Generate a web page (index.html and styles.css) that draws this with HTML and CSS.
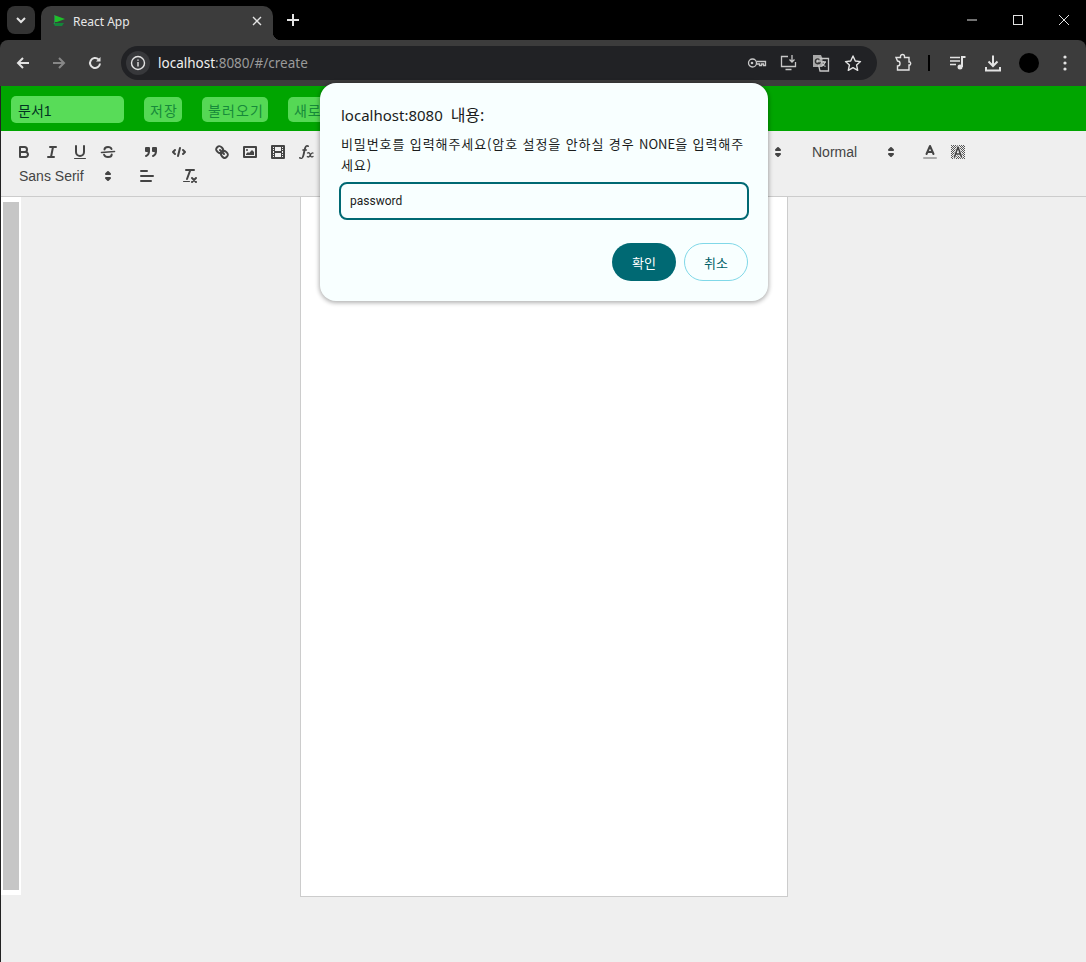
FILE: index.html
```html
<!DOCTYPE html>
<html lang="ko">
<head>
    <meta charset="UTF-8">
    <meta name="viewport" content="width=device-width, initial-scale=1.0">
    <title>React App</title>
    <link rel="stylesheet" href="styles.css">
</head>
<body>
<div class="window">

    <div class="tabstrip">
        <div class="tabsearch">
            <svg width="12" height="12" viewBox="0 0 12 12"><polyline class="line2" points="2 4 6 8 10 4"/></svg>
        </div>
        <div class="tab">
            <svg class="favicon" width="14" height="14" viewBox="0 0 14 14"><path fill="#1fbf2a" d="M2 1l11 4-8 3H3z"/><path fill="#14863a" d="M1 9h11l-2 3H3z"/><rect x="2" y="1" width="1" height="9" fill="#2f7f4f"/></svg>
            <span class="tabtitle">React App</span>
            <svg class="tabclose" width="10" height="10" viewBox="0 0 10 10"><path class="line" d="M1 1l8 8M9 1l-8 8"/></svg>
        </div>
        <svg class="newtab" width="12" height="12" viewBox="0 0 12 12"><path class="line2" d="M6 0v12M0 6h12"/></svg>
        <div class="winbtns">
            <svg width="10" height="10" viewBox="0 0 10 10"><path class="line1" d="M0 5h10"/></svg>
            <svg width="10" height="10" viewBox="0 0 10 10"><rect class="line1" x=".5" y=".5" width="9" height="9"/></svg>
            <svg width="10" height="10" viewBox="0 0 10 10"><path class="line1" d="M0 0l10 10M10 0L0 10"/></svg>
        </div>
    </div>

    <div class="navbar">
        <div class="navbtn">
            <svg width="16" height="16" viewBox="0 0 16 16"><path class="line2" d="M14 8H3M8 3L3 8l5 5"/></svg>
        </div>
        <div class="navbtn off">
            <svg width="16" height="16" viewBox="0 0 16 16"><path class="line2" d="M2 8h11M8 3l5 5-5 5"/></svg>
        </div>
        <div class="navbtn">
            <svg width="16" height="16" viewBox="0 0 16 16"><path class="line2" d="M13 8.500A5 5 0 1 1 11.500 4.400"/><path fill="#e3e3e3" d="M13.500 2v4.500H9z"/></svg>
        </div>
        <div class="omnibox">
            <div class="sitechip">
                <svg width="16" height="16" viewBox="0 0 16 16"><circle class="line" cx="8" cy="8" r="6.500"/><path class="line" d="M8 7v4.500M8 4.500v1.200"/></svg>
            </div>
            <div class="url"><span class="host">localhost</span>:8080/#/create</div>
            <svg class="omniicon" width="20" height="16" viewBox="0 0 20 16"><circle class="dim" cx="5.500" cy="8" r="4"/><circle fill="#c7c7c7" cx="5" cy="8" r="1.300"/><path class="dim" d="M9.500 6.500h9v4h-2V9h-2v1.500h-2V9H9.500"/></svg>
            <svg class="omniicon" width="20" height="18" viewBox="0 0 20 18"><path class="dim" d="M9 2.500H2.500v10h14V8M6.500 15.500h6"/><path class="dim" d="M13 1v7M10.500 5.500L13 8l2.500-2.500"/></svg>
            <svg class="omniicon" width="20" height="20" viewBox="0 0 20 20"><path fill="#a8a8a8" d="M2 2h8l1.500 3.500V14H2z"/><path class="dim" d="M6 5.500h11.500V18H9z"/><path class="dark" d="M8.500 6.500A2.500 2.500 0 1 0 8.800 10H6.500"/><path class="dim" d="M10 9h5M12.500 8v1M14 9c-.5 2-2 3.500-3.500 4M11 10.500c.7 1.300 2 2.300 3.500 3"/></svg>
            <svg class="omniicon" width="20" height="18" viewBox="0 0 20 18"><path class="line" stroke-linejoin="round" d="M10 2l2.300 5 5.200.6-3.900 3.500 1.100 5.200L10 13.700l-4.700 2.600 1.100-5.200L2.500 7.600 7.700 7z"/></svg>
        </div>
        <svg class="toolicon ext" width="20" height="20" viewBox="0 0 20 20"><path class="line" d="M3 4.500h4.500v-1a2 2 0 0 1 4 0v1H16V9h1a2 2 0 0 1 0 3h-1v5H4.500v-4c1.500 0 2.500-1 2.500-2.500S6 8 4.500 8z"/></svg>
        <div class="divider"></div>
        <svg class="toolicon media" width="20" height="18" viewBox="0 0 20 18"><path class="line" d="M2 3.500h10M2 7h10M2 10.500h6"/><path class="line2" d="M14 13V3h3.500"/><circle fill="#e3e3e3" cx="12" cy="13" r="2.500"/></svg>
        <svg class="toolicon down" width="20" height="20" viewBox="0 0 20 20"><path class="line2" d="M10 2.500V13M5.500 8.500L10 13l4.500-4.500M3 14v3.500h14V14"/></svg>
        <div class="avatar"></div>
        <svg class="toolicon kebab" width="4" height="16" viewBox="0 0 4 16"><circle fill="#e3e3e3" cx="2" cy="2" r="1.600"/><circle fill="#e3e3e3" cx="2" cy="8" r="1.600"/><circle fill="#e3e3e3" cx="2" cy="14" r="1.600"/></svg>
    </div>

    <div class="app">
        <header class="topbar">
            <input type="text" class="docname" value="문서1">
            <button class="topbtn">저장</button>
            <button class="topbtn">불러오기</button>
            <button class="topbtn">새로 만들기</button>
        </header>

        <div class="toolbar">
            <div class="group">
                <button class="tool"><svg viewBox="0 0 18 18"><path class="st" d="M5,4H9.500A2.500,2.500,0,0,1,12,6.500v0A2.500,2.500,0,0,1,9.500,9H5V4Z"/><path class="st" d="M5,9h5.500A2.500,2.500,0,0,1,13,11.500v0A2.500,2.500,0,0,1,10.500,14H5V9Z"/></svg></button>
                <button class="tool"><svg viewBox="0 0 18 18"><path class="st" d="M7 4h6M5 14h6M8 14l2-10"/></svg></button>
                <button class="tool"><svg viewBox="0 0 18 18"><path class="st" d="M5,3V9a4,4,0,0,0,4,4H9a4,4,0,0,0,4-4V3"/><rect class="fl" x="3" y="15" width="12" height="1" rx=".5"/></svg></button>
                <button class="tool"><svg viewBox="0 0 18 18"><path class="st thin" d="M15.500 8.500L2.500 9.500"/><path class="st" d="M12.500 6C12 4.600 10.600 4 9 4 7 4 5.500 5 5.500 6.500M12.700 11.500C12.700 13 11 14 9 14c-1.900 0-3.400-.8-3.900-2.300"/></svg></button>
            </div>
            <div class="group">
                <button class="tool"><svg viewBox="0 0 18 18"><rect class="fl st" x="4" y="5" width="3" height="3"/><rect class="fl st" x="11" y="5" width="3" height="3"/><path class="st" d="M7,8c0,4-3,5-3,5M14,8c0,4-3,5-3,5"/></svg></button>
                <button class="tool"><svg viewBox="0 0 18 18"><path class="st" d="M5 7L3 9l2 2M13 7l2 2-2 2M10 5L8 13"/></svg></button>
            </div>
            <div class="group">
                <button class="tool"><svg viewBox="0 0 18 18"><path class="st" d="M7 7l4 4"/><path class="st" d="M8.900,4.577a3.476,3.476,0,0,1,.36,4.679A3.476,3.476,0,0,1,4.577,8.900C3.185,7.500,2.035,6.400,4.217,4.217S7.500,3.185,8.900,4.577Z"/><path class="st" d="M13.423,9.100a3.476,3.476,0,0,0-4.679-.36,3.476,3.476,0,0,0,.36,4.679c1.392,1.392,2.500,2.542,4.679.36S14.815,10.500,13.423,9.100Z"/></svg></button>
                <button class="tool"><svg viewBox="0 0 18 18"><rect class="st" x="3" y="4" width="12" height="10"/><circle class="fl" cx="6" cy="7" r="1"/><polygon class="fl" points="5 12 5 11 7 9 8 10 11 7 13 9 13 12 5 12"/></svg></button>
                <button class="tool"><svg viewBox="0 0 18 18"><rect class="st" x="3" y="3" width="12" height="12"/><rect class="fl" x="5" y="3" width="1" height="12"/><rect class="fl" x="12" y="3" width="1" height="12"/><rect class="fl" x="5" y="8" width="8" height="2"/><rect class="fl" x="3" y="5" width="3" height="1"/><rect class="fl" x="3" y="7" width="3" height="1"/><rect class="fl" x="3" y="10" width="3" height="1"/><rect class="fl" x="3" y="12" width="3" height="1"/><rect class="fl" x="12" y="5" width="3" height="1"/><rect class="fl" x="12" y="7" width="3" height="1"/><rect class="fl" x="12" y="10" width="3" height="1"/><rect class="fl" x="12" y="12" width="3" height="1"/></svg></button>
                <button class="tool"><svg viewBox="0 0 18 18"><path class="fl" d="M11.759,2.482a2.561,2.561,0,0,0-3.530.607A7.656,7.656,0,0,0,6.800,6.200C6.109,9.188,5.275,14.677,4.150,14.927a1.545,1.545,0,0,0-1.300-.933A0.922,0.922,0,0,0,2,15.036S1.954,16,4.119,16s3.091-2.691,3.700-5.553c0.177-.826.360-1.726,0.554-2.600L8.775,6.200c0.381-1.421.807-2.521,1.306-2.676a1.014,1.014,0,0,0,1.020.560A0.966,0.966,0,0,0,11.759,2.482Z"/><rect class="fl" x="5.150" y="6.200" width="5" height="1.600" rx=".8"/><path class="st x-mark" d="M10.500 10c1.600-.8 2.400.2 2.800 2 .4 1.800 1.300 2.500 2.700 1.500M16 10c-1.400-.4-2.400 1.400-3 2.600-.6 1.200-1.500 1.700-2.700 1.100"/></svg></button>
            </div>
            <div class="group">
                <button class="tool"><svg viewBox="0 0 18 18"><path class="st" d="M7 4h8M7 9h8M7 14h8"/><path class="st thin" d="M3 3.500h1v3M3 12h2l-2 3h2"/></svg></button>
                <button class="tool"><svg viewBox="0 0 18 18"><path class="st" d="M6 4h9M6 9h9M6 14h9M3 4h0M3 9h0M3 14h0"/></svg></button>
            </div>
            <div class="group">
                <button class="tool"><svg viewBox="0 0 18 18"><path class="st" d="M15 5L8 13M8 5l7 8"/><path class="st thin" d="M3 9.500h2.500"/></svg></button>
                <button class="tool"><svg viewBox="0 0 18 18"><path class="st" d="M15 5L8 13M8 5l7 8"/><path class="st thin" d="M3 3.500h2.500"/></svg></button>
            </div>
            <div class="group">
                <button class="tool"><svg viewBox="0 0 18 18"><path class="st" d="M3 4h12M3 14h12M9 9h6M3 7l3 2-3 2"/></svg></button>
                <button class="tool"><svg viewBox="0 0 18 18"><path class="st" d="M3 4h12M3 14h12M9 9h6M6 7L3 9l3 2"/></svg></button>
            </div>
            <div class="group">
                <button class="tool"><svg viewBox="0 0 18 18"><path class="st" d="M13 4v10M9 4v10M9 4H7a3 3 0 0 0 0 6h2"/></svg></button>
            </div>
            <div class="group">
                <div class="picker heading"><span>Heading</span><svg viewBox="0 0 18 18"><polygon class="st" points="7 11 9 13 11 11"/><polygon class="st" points="7 7 9 5 11 7"/></svg></div>
            </div>
            <div class="group">
                <div class="picker"><span>Normal</span><svg viewBox="0 0 18 18"><polygon class="st" points="7 11 9 13 11 11"/><polygon class="st" points="7 7 9 5 11 7"/></svg></div>
            </div>
            <div class="group">
                <div class="picker"><span>Normal</span><svg viewBox="0 0 18 18"><polygon class="st" points="7 11 9 13 11 11"/><polygon class="st" points="7 7 9 5 11 7"/></svg></div>
            </div>
            <div class="group">
                <button class="tool"><svg viewBox="0 0 18 18"><path class="st grey" d="M3 15h12"/><path class="st" d="M5.500 11L9 3l3.500 8M11.630 9H6.380"/></svg></button>
                <button class="tool"><svg viewBox="0 0 18 18"><defs><pattern id="dots" width="2" height="2" patternUnits="userSpaceOnUse"><rect width="1" height="1" fill="#555"/><rect x="1" y="1" width="1" height="1" fill="#555"/></pattern></defs><rect x="2" y="2" width="14" height="14" fill="url(#dots)"/><path class="st halo" d="M5.500 14L9 4l3.500 10M11.630 11H6.380"/><path class="st thin" d="M5.500 14L9 4l3.500 10M11.630 11H6.380"/></svg></button>
            </div>
            <div class="group">
                <div class="picker font"><span>Sans Serif</span><svg viewBox="0 0 18 18"><polygon class="st" points="7 11 9 13 11 11"/><polygon class="st" points="7 7 9 5 11 7"/></svg></div>
            </div>
            <div class="group">
                <button class="tool"><svg viewBox="0 0 18 18"><path class="st" d="M3 9h12M3 14h10M3 4h6"/></svg></button>
            </div>
            <div class="group">
                <button class="tool"><svg viewBox="0 0 18 18"><path class="st" d="M5 3h8M6 12L9.350 3M11 11l4 4M15 11l-4 4"/><rect class="fl" x="2" y="14" width="7" height="1" rx=".5"/></svg></button>
            </div>
        </div>

        <main class="workspace">
            <div class="sidebar"><div class="sidebar-thumb"></div></div>
            <div class="sheet"></div>
        </main>
    </div>

    <div class="dialog">
        <div class="dialog-title">localhost:8080 <span class="ko">내용:</span></div>
        <div class="dialog-msg">비밀번호를 입력해주세요(암호 설정을 안하실 경우 <span class="caps">NONE</span>을 입력해주세요)</div>
        <input type="text" class="dialog-input" value="password">
        <div class="dialog-btns">
            <button class="okbtn">확인</button>
            <button class="cancelbtn">취소</button>
        </div>
    </div>

</div>
</body>
</html>
```

FILE: styles.css
```css
*{
    margin: 0;
    padding: 0;
    box-sizing: border-box;
}
body{
    background: #000;
    font-family: "Noto Sans", "Noto Sans CJK KR", sans-serif;
}
.window{
    position: relative;
    width: 1086px;
    height: 962px;
    overflow: hidden;
    background: #000;
}
svg{
    display: block;
    flex: none;
}
.line, .line1, .line2, .dim, .dark{
    fill: none;
    stroke: #e3e3e3;
    stroke-width: 1.4;
}
.line1{
    stroke-width: 1;
}
.line2{
    stroke-width: 2;
}
.dim{
    stroke: #c7c7c7;
    stroke-width: 1.3;
}
.dark{
    stroke: #333;
}

/* browser tabs */
.tabstrip{
    display: flex;
    align-items: flex-end;
    height: 40px;
    padding-left: 7px;
}
.tabsearch{
    display: flex;
    justify-content: center;
    align-items: center;
    width: 28px;
    height: 28px;
    margin-bottom: 6px;
    background: #333;
    border-radius: 8px;
}
.tab{
    position: relative;
    display: flex;
    align-items: center;
    width: 232px;
    height: 34px;
    margin-left: 6px;
    padding: 0 11px 4px 11px;
    background: #3c3c3c;
    border-radius: 10px 10px 0 0;
}
.tab::after{
    content: "";
    position: absolute;
    right: -8px;
    bottom: 0;
    width: 8px;
    height: 8px;
    background: radial-gradient(circle at 100% 0, #000 8px, #3c3c3c 8.5px);
}
.favicon{
    margin-right: 7px;
}
.tabtitle{
    flex: 1;
    font-size: 12px;
    color: #e8e8e8;
}
.newtab{
    margin: 0 0 14px 14px;
}
.winbtns{
    display: flex;
    gap: 36px;
    margin-left: auto;
    margin-right: 17px;
    margin-bottom: 15px;
}

/* browser toolbar */
.navbar{
    display: flex;
    align-items: center;
    height: 46px;
    padding-left: 15px;
    background: #3c3c3c;
    border-radius: 8px 8px 0 0;
}
.navbtn{
    width: 16px;
    margin-right: 20px;
}
.navbtn.off{
    opacity: 0.45;
}
.omnibox{
    display: flex;
    align-items: center;
    width: 756px;
    height: 34px;
    margin-left: -2px;
    padding: 0 14px 0 5px;
    background: #212225;
    border-radius: 17px;
}
.sitechip{
    display: flex;
    justify-content: center;
    align-items: center;
    width: 24px;
    height: 24px;
    background: #37383b;
    border-radius: 50%;
}
.url{
    flex: 1;
    margin-left: 8px;
    margin-bottom: 1px;
    font-size: 13.500px;
    color: #9a9a9a;
}
.host{
    color: #f0f0f0;
}
.omniicon{
    margin-left: 12px;
}
.toolicon.ext{
    margin-left: 16px;
}
.divider{
    width: 2px;
    height: 16px;
    margin-left: 15px;
    background: #000;
}
.toolicon.media{
    margin-left: 18px;
}
.toolicon.down{
    margin-left: 15px;
}
.avatar{
    width: 20px;
    height: 20px;
    margin-left: 16px;
    background: #000;
    border-radius: 50%;
}
.toolicon.kebab{
    margin-left: 24px;
}

/* page */
.app{
    height: 876px;
    background: #efefef;
    border-left: 1px solid #222;
}
.topbar{
    display: flex;
    align-items: center;
    gap: 20px;
    height: 45px;
    padding: 2px 0 0 10px;
    background: #00a500;
    overflow: hidden;
}
.docname{
    width: 113px;
    height: 27px;
    padding-left: 7px;
    border: none;
    border-radius: 5px;
    background: #58dc58;
    font-family: "Liberation Sans", "Noto Sans CJK KR", sans-serif;
    font-size: 14px;
    color: #032;
}
.topbtn{
    flex: none;
    height: 25px;
    padding: 0 4px 0 6px;
    border: none;
    border-radius: 5px;
    background: #55d855;
    font-family: "Liberation Sans", "Noto Sans CJK KR", sans-serif;
    font-size: 14px;
    letter-spacing: 1.100px;
    color: #178a3a;
}

/* editor toolbar */
.toolbar{
    display: flex;
    flex-wrap: wrap;
    height: 66px;
    padding: 9px 9px 8px;
    border-bottom: 1px solid #ccc;
    font-family: "Liberation Sans", sans-serif;
}
.group{
    display: flex;
    margin-right: 15px;
}
.tool{
    width: 28px;
    height: 24px;
    padding: 3px 5px;
    border: none;
    background: none;
}
.st{
    fill: none;
    stroke: #444;
    stroke-width: 2;
    stroke-linecap: round;
    stroke-linejoin: round;
}
.fl{
    fill: #444;
}
.st.fl{
    fill: #444;
}
.st.thin{
    stroke-width: 1.600;
}
.st.x-mark{
    stroke-width: 1.300;
}
.st.grey{
    stroke: #aaa;
}
.st.halo{
    stroke: #efefef;
    stroke-width: 3;
}
.picker{
    display: flex;
    justify-content: space-between;
    align-items: center;
    width: 98px;
    height: 24px;
    padding: 0 1px 0 9px;
    font-size: 14px;
    font-weight: 500;
    color: #444;
}
.picker svg{
    width: 18px;
    height: 18px;
}
.picker.heading{
    width: 84px;
}
.picker.font{
    width: 108px;
}

/* document */
.workspace{
    display: flex;
    align-items: flex-start;
}
.sidebar{
    width: 20px;
    height: 698px;
    padding: 5px 2px 5px 2px;
    background: #fff;
}
.sidebar-thumb{
    height: 688px;
    background: #c6c6c6;
}
.sheet{
    width: 488px;
    height: 700px;
    margin-left: 279px;
    background: #fff;
    border: 1px solid #ccc;
    border-top: none;
}

/* password prompt */
.dialog{
    position: absolute;
    left: 320px;
    top: 83px;
    display: flex;
    flex-direction: column;
    width: 448px;
    height: 218px;
    padding: 20px 19px;
    background: #f8ffff;
    border-radius: 16px;
    box-shadow: 0 1px 4px 1px rgba(0,0,0,0.3);
    color: #1a1c1c;
}
.dialog-title{
    padding-left: 2px;
    font-size: 15px;
    line-height: 24px;
}
.dialog-title .ko{
    margin-left: 4px;
    font-size: 16px;
}
.dialog-msg{
    margin-top: 6px;
    padding-left: 2px;
    font-family: "Noto Sans CJK KR", sans-serif;
    font-size: 13px;
    line-height: 21px;
    letter-spacing: 0.900px;
}
.dialog-msg .caps{
    letter-spacing: 0;
}
.dialog-input{
    width: 410px;
    height: 38px;
    margin-top: 7px;
    padding-left: 9px;
    border: 2px solid #006973;
    border-radius: 8px;
    background: #f8ffff;
    font-family: Roboto, sans-serif;
    font-size: 12px;
    color: #1a1c1c;
    outline: none;
}
.dialog-btns{
    display: flex;
    justify-content: flex-end;
    gap: 8px;
    margin-top: 23px;
    padding-right: 1px;
}
.okbtn, .cancelbtn{
    width: 64px;
    height: 38px;
    border-radius: 19px;
    font-family: inherit;
    font-size: 13px;
}
.okbtn{
    border: none;
    background: #006973;
    color: #fff;
}
.cancelbtn{
    border: 1px solid #80d8e8;
    background: #f8ffff;
    color: #005f68;
}
```
